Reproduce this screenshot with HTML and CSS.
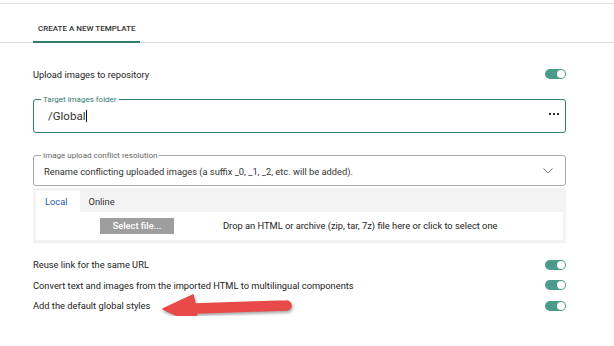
FILE: index.html
```html
<!DOCTYPE html>
<html lang="en">

<head>
  <meta charset="UTF-8">
  <title>Create a new template</title>
  <link rel="stylesheet" href="styles.css">
</head>

<body>
  <div class="topline"></div>
  <div class="tabs">
    <div class="tab active">CREATE A NEW TEMPLATE</div>
  </div>

  <div class="form">
    <div class="row first">
      <span>Upload images to repository</span>
      <span class="toggle"></span>
    </div>

    <fieldset class="field focused">
      <legend>Target images folder</legend>
      <div class="field-body">
        <span class="value">/Global<span class="caret"></span></span>
        <span class="dots"><i></i><i></i><i></i></span>
      </div>
    </fieldset>

    <fieldset class="field select">
      <legend>Image upload conflict resolution</legend>
      <div class="field-body">
        <span>Rename conflicting uploaded images (a suffix _0, _1, _2, etc. will be added).</span>
        <svg class="chevron" width="10" height="6" viewBox="0 0 10 6">
          <path d="M0.5 0.5 L5 5 L9.5 0.5" fill="none" stroke="#777" stroke-width="1" />
        </svg>
      </div>
    </fieldset>

    <div class="upload">
      <div class="upload-tabs">
        <div class="utab selected">Local</div>
        <div class="utab">Online</div>
      </div>
      <div class="upload-body">
        <button type="button">Select file...</button>
        <span>Drop an HTML or archive (zip, tar, 7z) file here or click to select one</span>
      </div>
    </div>

    <div class="options">
      <div class="row">
        <span>Reuse link for the same URL</span>
        <span class="toggle"></span>
      </div>
      <div class="row">
        <span>Convert text and images from the imported HTML to multilingual components</span>
        <span class="toggle"></span>
      </div>
      <div class="row">
        <span>Add the default global styles</span>
        <span class="toggle"></span>
      </div>
      <svg class="arrow" width="136" height="38" viewBox="0 0 136 38">
        <path d="M2 17 L32 3 L34 12 L125 9 A4.5 4.5 0 0 1 126 18 L35 21 L37 33 Z"
          fill="#e84a49" stroke="#e84a49" stroke-width="1.5" stroke-linejoin="round" />
      </svg>
    </div>
  </div>
</body>

</html>
```

FILE: styles.css
```css
body {
  font-family: 'Roboto', 'Liberation Sans', sans-serif;
  font-size: 9.3px;
  color: #222;
  background-color: #ffffff;
  margin: 0;
}

.topline {
  height: 3px;
  border-bottom: 1px solid #e2e2e2;
}

.tabs {
  padding-left: 33px;
  border-bottom: 1px solid #dcdcdc;
  display: flex;
  margin-top: 20px;
}

.tab {
  font-size: 8px;
  font-weight: 500;
  color: #333;
  padding: 0 5px 8px;
  border-bottom: 2px solid #2f7e70;
  margin-bottom: -1px;
}

.form {
  width: 533px;
  padding-left: 33px;
}

.row {
  display: flex;
  align-items: center;
  justify-content: space-between;
  height: 20.5px;
}

.row.first {
  margin-top: 21px;
}

.toggle {
  width: 21px;
  height: 10px;
  border-radius: 5px;
  background-color: #4c9a89;
  position: relative;
}

.toggle::after {
  content: "";
  position: absolute;
  right: 1px;
  top: 1px;
  width: 8px;
  height: 8px;
  border-radius: 50%;
  background-color: #ffffff;
}

.field {
  margin: 0;
  padding: 0 6px 0 14px;
  border: 1px solid #a9a9a9;
  border-radius: 3px;
  min-width: 0;
}

.field legend {
  font-size: 8px;
  color: #666;
  padding: 0 2px;
  margin-left: -7px;
  line-height: 9px;
}

.field.focused {
  margin-top: 10px;
  border-color: #2f7e70;
}

.field.focused legend {
  color: #2f7e70;
}

.field-body {
  display: flex;
  align-items: center;
  justify-content: space-between;
}

.focused .field-body {
  height: 25px;
  padding-bottom: 3px;
}

.value {
  font-size: 11.5px;
  color: #333;
  display: flex;
  align-items: center;
}

.caret {
  width: 1px;
  height: 12px;
  background-color: #111;
  margin-left: 1px;
}

.dots {
  display: flex;
  gap: 2px;
  margin-bottom: 4px;
}

.dots i {
  width: 2px;
  height: 2px;
  background-color: #2a2d4a;
}

.field.select {
  margin-top: 18px;
  padding-left: 10px;
}

.field.select legend {
  margin-left: -3px;
}

.select .field-body {
  height: 23px;
  padding-bottom: 2px;
  color: #333;
}

.chevron {
  margin-right: 6px;
}

.upload {
  margin-top: 2px;
  background-color: #f3f3f3;
  padding: 3px;
}

.upload-tabs {
  display: flex;
}

.utab {
  padding: 0 9px;
  height: 21px;
  line-height: 21px;
  color: #333;
}

.utab.selected {
  background-color: #ffffff;
  color: #2a5aa8;
  padding: 0 12px 0 9px;
}

.upload-body {
  background-color: #ffffff;
  height: 28px;
  display: flex;
  align-items: center;
}

.upload-body button {
  font-family: inherit;
  font-size: 9.3px;
  font-weight: 500;
  color: #ffffff;
  background-color: #9e9e9e;
  border: none;
  border-radius: 0;
  width: 74px;
  height: 16px;
  padding: 0;
  margin-left: 64px;
  margin-right: 49px;
}

.options {
  margin-top: 12px;
  position: relative;
}

.arrow {
  position: absolute;
  left: 128px;
  top: 37px;
  filter: drop-shadow(1px 2px 1.5px rgba(0, 0, 0, 0.35));
}
```
